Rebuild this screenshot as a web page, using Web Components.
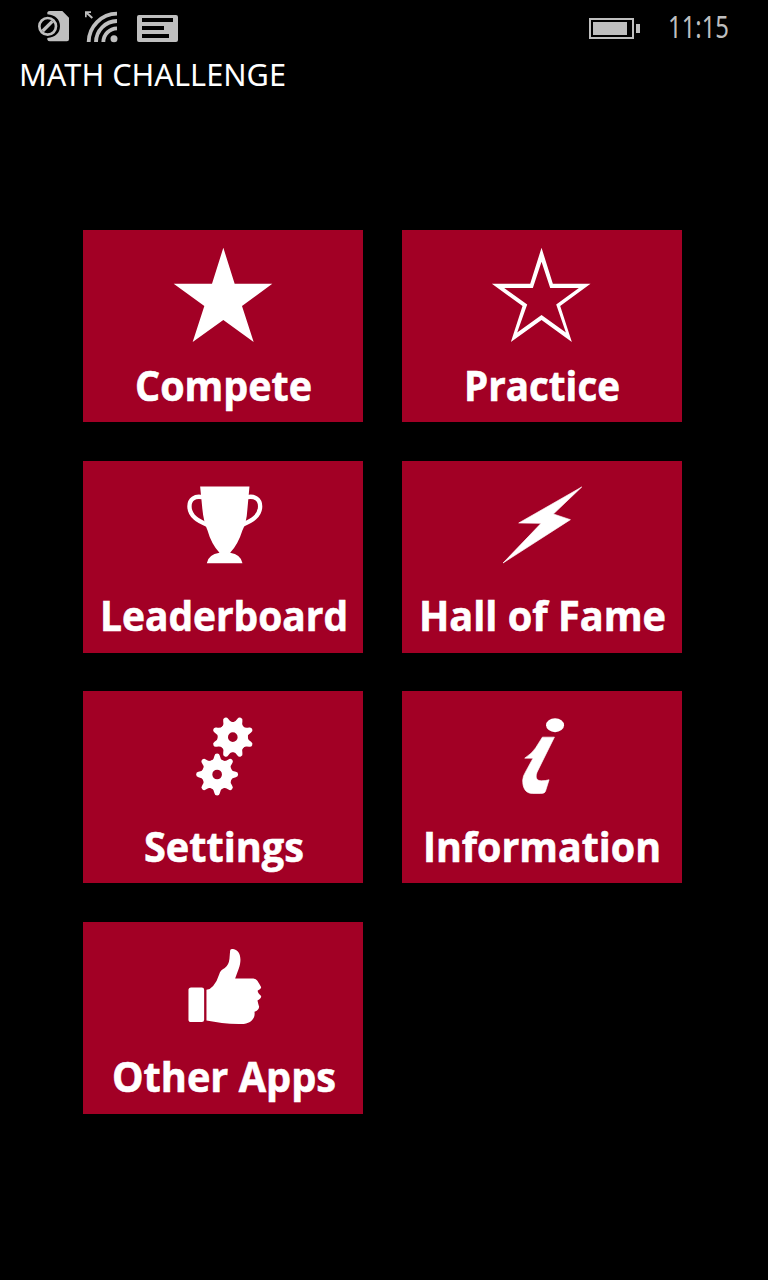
<!DOCTYPE html>
<html lang="en">
<head>
<meta charset="utf-8">
<title>Math Challenge</title>
<style>
html,body{margin:0;background:#000}
body{width:768px;height:1280px;overflow:hidden;font-family:"Noto Sans","Open Sans",sans-serif}
</style>
</head>
<body>
<math-app></math-app>
<script>
/* A single line of text condensed or widened to a given advance width. */
class FitText extends HTMLElement{
  constructor(){super();this.attachShadow({mode:'open'}).innerHTML='<style>:host{display:block;white-space:nowrap}span{display:inline-block;transform-origin:0 50%}</style><span><slot></slot></span>';}
  connectedCallback(){
    const span=this.shadowRoot.querySelector('span');
    const w=+this.getAttribute('width');
    const natural=span.getBoundingClientRect().width;
    this.style.width=w+'px';
    span.style.transform='scaleX('+w/natural+')';
  }
}
class StatusBar extends HTMLElement{
  constructor(){super();this.attachShadow({mode:'open'}).innerHTML=`
<style>
:host{display:flex;height:54px;align-items:flex-start;color:#bfbfbf;box-sizing:border-box;padding-right:39px}
svg{display:block}
.sp{flex:1}
fit-text{font-size:31.5px;line-height:43px;margin-top:4px}
</style>
<svg width="200" height="54" viewBox="0 0 200 54" fill="#bfbfbf">
  <g transform="translate(20 0) scale(.33333)">
    <path d="M82 37Q84 33 90 33H127L147 53V118Q147 124 141 124H90Q84 124 82 119V114Q119 110 120 79Q119 47 82 43Z"/>
    <circle cx="83" cy="79" r="25" fill="none" stroke="#bfbfbf" stroke-width="8"/>
    <path d="M68 93L97 64" stroke="#bfbfbf" stroke-width="10"/>
    <path d="M195 34H213V39H205L219 52L215 56L200 43V52H195Z"/>
    <g fill="none" stroke="#bfbfbf" stroke-width="11.5"><path d="M206 126A86 86 0 0 1 291 41M228 126A64 64 0 0 1 291 63M250 126A42 42 0 0 1 291 85"/></g>
    <circle cx="282" cy="116" r="10.5"/>
    <path fill-rule="evenodd" d="M357 45H468Q474 45 474 51V120Q474 126 468 126H357Q351 126 351 120V51Q351 45 357 45ZM366 54V66H459V54ZM366 78V90H432V78ZM366 102V114H447V102Z"/>
  </g>
</svg>
<span class="sp"></span>
<svg width="62" height="54" viewBox="0 0 62 54" fill="#bfbfbf">
  <path fill-rule="evenodd" d="M0 18H45V39H0ZM2 20V37H43V20Z"/><path d="M4 22H38V35H4ZM47 24H51V33H47Z"/>
</svg>
<fit-text width="61" style="margin-left:17px">11:15</fit-text>`;}
}
const icons={
star:`<g transform="translate(-3 -4.9) scale(.33333)"><path d="M430 68L464 176H577L486 243L521 351L430 285L338 351L373 243L281 176H396Z"/></g>`,
outline:`<g transform="translate(-3.8 -4.9) scale(.33333)"><path fill-rule="evenodd" d="M430 68L464 176H577L486 243L521 351L430 285L338 351L373 243L281 176H396ZM430 110L404 189H318L387 238L357 322L430 270L503 322L474 238L542 189H456Z"/></g>`,
trophy:`<g transform="translate(86.8 14.2) scale(.33333)"><path d="M91 34H239L233 100Q230 146 218 165Q205 207 181 233Q213 238 218 264H111Q116 238 149 233Q124 205 113 165Q101 140 97 95Z"/><path d="M98 66C75 61 59 72 59 93C59 124 86 137 112 149M232 66C255 61 271 72 271 93C271 124 244 137 218 149" fill="none" stroke="#fff" stroke-width="13"/></g>`,
bolt:`<g transform="translate(88.4 14) scale(.33333)"><path d="M274 36L189 117L240 134L38 264L152 145L85 144Z" stroke="#fff" stroke-width="2"/></g>`,
info:`<g transform="translate(98.4 13.8) scale(.33333)"><ellipse cx="164" cy="61" rx="27" ry="21"/><path d="M126 97H162L110 202C103 220 110 228 123 228Q135 228 146 225L135 260Q133 266 120 266H96C75 266 66 248 67 225Q68 213 75 202L98 160H73Q95 146 106 129Z" stroke="#fff" stroke-width="2"/></g>`,
thumb:`<g transform="translate(91.8 13.4) scale(.33333)"><path d="M49 156H81Q88 156 88 163V253Q88 260 81 260H49Q41 260 41 252V164Q41 156 49 156Z"/><path d="M95 163Q107 162 115 152Q127 137 133 117Q137 104 150 98Q162 89 164 70L166 45Q167 40 175 41C197 44 202 72 192 99L181 129H232C248 129 250 142 258 153Q262 161 249 165Q247 170 259 182Q260 188 248 195Q250 204 253 214Q252 225 239 229C243 251 225 266 200 266C160 267 127 260 95 255Z"/></g>`,
gears:''
};
/* Eight-toothed gear with rounded tooth tips. */
function gear(cx,cy,rot){
  let teeth='';
  for(let i=0;i<8;i++)teeth+=`<path transform="rotate(${rot+i*45} ${cx} ${cy})" d="M${cx-18} ${cy-39}Q${cx-9} ${cy-46} ${cx-8} ${cy-56}Q${cx-7} ${cy-63} ${cx} ${cy-63}Q${cx+7} ${cy-63} ${cx+8} ${cy-56}Q${cx+9} ${cy-46} ${cx+18} ${cy-39}Z"/>`;
  return teeth+`<circle cx="${cx}" cy="${cy}" r="30" fill="none" stroke="#fff" stroke-width="31"/>`;
}
icons.gears=`<g transform="translate(96.8 13.8) scale(.33333)">${gear(159,97,22.5)}${gear(112,209,0)}</g>`;
class MenuTile extends HTMLElement{
  constructor(){super();this.attachShadow({mode:'open'});}
  connectedCallback(){
    this.shadowRoot.innerHTML=`
<style>
:host{display:flex;flex-direction:column;align-items:center;background:#a20025;color:#fff;height:192px;overflow:hidden}
svg{display:block;flex:none}
fit-text{font-family:"Open Sans","Noto Sans",sans-serif;font-weight:700;font-size:41.4px;line-height:57px;margin:6.4px 0 0 1px;-webkit-text-stroke:.6px #fff}
</style>
<svg width="280" height="120" viewBox="0 0 280 120" fill="#fff">${icons[this.getAttribute('icon')]}</svg>
<fit-text width="${this.getAttribute('label-width')}">${this.getAttribute('label')}</fit-text>`;
  }
}
class MathApp extends HTMLElement{
  constructor(){super();this.attachShadow({mode:'open'}).innerHTML=`
<style>
:host{display:flex;flex-direction:column;height:1280px;background:#000;color:#fff}
h1{margin:-2.5px 0 2.5px 19px;font-weight:400;font-size:31.5px;line-height:43px;height:43px}
main{display:grid;grid-template-columns:280px 280px;gap:38.4px;margin:133.4px 0 0 83.2px}
</style>
<status-bar></status-bar>
<h1><fit-text width="267">MATH CHALLENGE</fit-text></h1>
<main>
<menu-tile icon="star" label="Compete" label-width="177"></menu-tile>
<menu-tile icon="outline" label="Practice" label-width="156"></menu-tile>
<menu-tile icon="trophy" label="Leaderboard" label-width="248"></menu-tile>
<menu-tile icon="bolt" label="Hall of Fame" label-width="247"></menu-tile>
<menu-tile icon="gears" label="Settings" label-width="160"></menu-tile>
<menu-tile icon="info" label="Information" label-width="238"></menu-tile>
<menu-tile icon="thumb" label="Other Apps" label-width="224"></menu-tile>
</main>`;}
}
customElements.define('fit-text',FitText);
customElements.define('status-bar',StatusBar);
customElements.define('menu-tile',MenuTile);
customElements.define('math-app',MathApp);
</script>
</body>
</html>
